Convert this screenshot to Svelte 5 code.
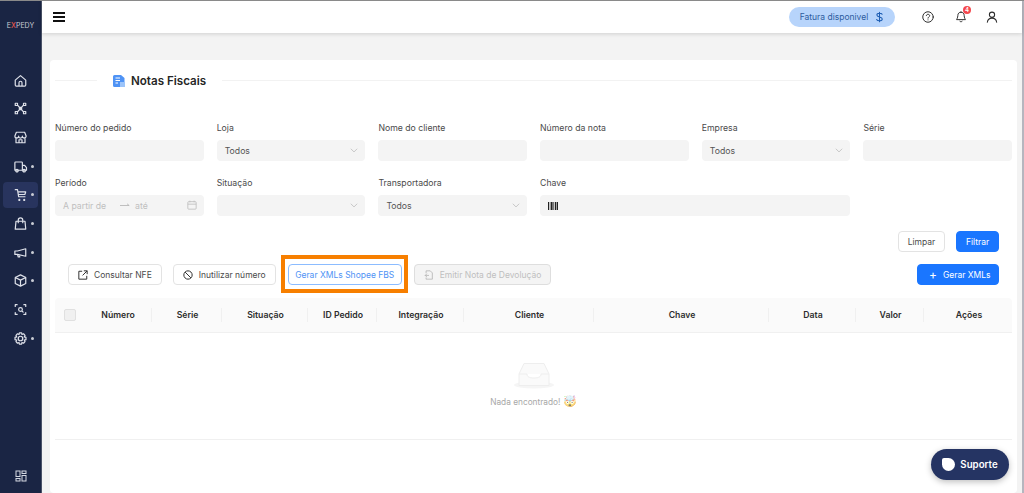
<script lang="ts">
  const navIcons = [
    { d: 'M3 9.500 10 3.500l7 6V16a1.500 1.500 0 0 1-1.500 1.500h-11A1.500 1.500 0 0 1 3 16ZM8 17.500V13a2 2 0 0 1 4 0v4.500', dot: false },
    { d: 'M10 10 6 5.500M10 10l4-4.500M10 10l-4 4.500M10 10l4 4.500M3 3h3v3H3ZM14 3h3v3h-3ZM3 14h3v3H3ZM14 14h3v3h-3ZM8.500 8.500h3v3h-3Z', dot: false },
    { d: 'M4.500 3h11L17.500 8a2.500 2.500 0 0 1-5 .2 2.500 2.500 0 0 1-5 0 2.500 2.500 0 0 1-5-.2ZM4 11v6h12v-6M8 17v-4h4v4', dot: false },
    { d: 'M2.500 5a1 1 0 0 1 1-1h8a1 1 0 0 1 1 1v10h-10ZM12.500 8.500h3l2.500 3V15h-5.500M7 15.500a1.700 1.700 0 1 1-3.400 0 1.700 1.700 0 0 1 3.400 0ZM16.500 15.500a1.700 1.700 0 1 1-3.400 0 1.700 1.700 0 0 1 3.400 0Z', dot: true },
    { d: 'M3 3.500h3l1.500 9.500h8.500M6.500 6.500h10.500l-1.200 3.500H7M8.500 16.500a.7.7 0 1 1-.1 0ZM15 16.500a.7.7 0 1 1-.1 0Z', dot: true, active: true },
    { d: 'M4 7h12l1 10.500H3ZM7 9V5.500a3 3 0 0 1 6 0V9', dot: true },
    { d: 'M2.500 8v4.500h3.500l11 2.500V5L6 8ZM6 12.500 7 16h2l-.8-3', dot: true },
    { d: 'M10 2.500 17 6v8l-7 3.500L3 14V6ZM3 6l7 3.500L17 6M10 9.500v8', dot: true },
    { d: 'M3 6V3.500h2.500M14.500 3.500H17V6M17 14v2.500h-2.500M5.500 16.500H3V14M10 7.500a2.500 2.500 0 1 0 0 5 2.500 2.500 0 0 0 0-5ZM12 12l1.500 1.500', dot: false },
    { d: 'M10 7a3 3 0 1 0 0 6 3 3 0 0 0 0-6ZM8.500 2.500h3l.5 2.200 2-1 2 2.200-1 2 2.300.6v3l-2.300.6 1 2-2 2.200-2-1-.5 2.200h-3l-.5-2.200-2 1-2-2.200 1-2-2.300-.6v-3l2.300-.6-1-2 2-2.200 2 1Z', dot: true },
  ];

  const row1 = [
    { label: 'Número do pedido' },
    { label: 'Loja', value: 'Todos', select: true },
    { label: 'Nome do cliente' },
    { label: 'Número da nota' },
    { label: 'Empresa', value: 'Todos', select: true },
    { label: 'Série' },
  ];

  const columns = [
    { label: 'Número', w: 67 },
    { label: 'Série', w: 70 },
    { label: 'Situação', w: 86 },
    { label: 'ID Pedido', w: 69 },
    { label: 'Integração', w: 87 },
    { label: 'Cliente', w: 130 },
    { label: 'Chave', w: 175 },
    { label: 'Data', w: 87 },
    { label: 'Valor', w: 68 },
    { label: 'Ações', w: 0 },
  ];
</script>

<div class="page">
  <aside class="sidebar">
    <div class="logo"><span>E</span><b>X</b><span>PEDY</span></div>
    <nav class="nav">
      {#each navIcons as item}
        <div class="nav-item" class:active={item.active}>
          <svg viewBox="0 0 20 20" width="15" height="15" fill="none" stroke="#dfe2ea" stroke-width="1.600" stroke-linejoin="round" stroke-linecap="round"><path d={item.d} /></svg>
          {#if item.dot}<span class="nav-dot"></span>{/if}
        </div>
      {/each}
    </nav>
    <svg class="apps" viewBox="0 0 12 12" width="12" height="12" fill="none" stroke="#d5d9e2" stroke-width="1"><rect x="1" y="1" width="4" height="5.500" /><rect x="7" y="1" width="4" height="2.500" /><rect x="1" y="8.500" width="4" height="2.500" /><rect x="7" y="5.500" width="4" height="5.500" /></svg>
  </aside>

  <div class="main">
    <header class="topbar">
      <div class="burger"><i></i><i></i><i></i></div>
      <div class="top-right">
        <div class="invoice">
          <span>Fatura disponivel</span>
          <svg viewBox="0 0 12 14" width="9" height="12" fill="none" stroke="#1f5fb4" stroke-width="1.400" stroke-linecap="round"><path d="M6 .8v12.400M9.500 3.300C9 2.300 7.800 2 6 2 4 2 2.500 2.800 2.500 4.400 2.500 7.800 9.700 6 9.700 9.600 9.700 11.200 8 12 6 12c-2 0-3.300-.5-3.800-1.700" /></svg>
        </div>
        <svg class="help" viewBox="0 0 16 16" width="12" height="12" fill="none" stroke="#2b2b2b" stroke-width="1.300" stroke-linecap="round"><circle cx="8" cy="8" r="7" /><path d="M5.800 6.200C6 4.900 7 4.400 8 4.400c1.300 0 2.200.8 2.200 1.900 0 1.600-2.200 1.600-2.200 3.200M8 11.800v.1" /></svg>
        <div class="bell">
          <svg viewBox="0 0 16 16" width="12" height="12" fill="none" stroke="#2b2b2b" stroke-width="1.300" stroke-linejoin="round" stroke-linecap="round"><path d="M8 1.500c-2.800 0-4.200 2-4.200 4.500 0 3-1.800 5.500-1.800 5.500h12S12.200 9 12.200 6c0-2.500-1.400-4.500-4.200-4.500ZM6.500 13.800c.8.800 2.200.8 3 0" /></svg>
          <span class="badge">4</span>
        </div>
        <svg class="user" viewBox="0 0 16 16" width="12" height="12" fill="none" stroke="#2b2b2b" stroke-width="1.400" stroke-linecap="round"><circle cx="8" cy="5" r="3.500" /><path d="M1.800 15c.5-3.500 3-5.500 6.200-5.500s5.700 2 6.200 5.500" /></svg>
      </div>
    </header>

    <div class="content">
      <section class="card">
        <div class="title-row">
          <span class="rule short"></span>
          <svg viewBox="0 0 12 12" width="12" height="12"><path d="M1.500 0h6.500L11.500 3v7.500A1.500 1.500 0 0 1 10 12H1.500A1.500 1.500 0 0 1 0 10.500V1.500A1.500 1.500 0 0 1 1.500 0Z" fill="#4f93f5" /><path d="M2.500 3h4.500M2.500 5.500h4.500M2.500 8h2.500" stroke="#fff" stroke-width="1.200" /><rect x="7" y="7" width="5" height="5" fill="#9cc4fa" /></svg>
          <h1>Notas Fiscais</h1>
          <span class="rule"></span>
        </div>

        <div class="filters">
          {#each row1 as f}
            <div class="field">
              <span class="label">{f.label}</span>
              <div class="input">
                {#if f.value}<span>{f.value}</span>{/if}
                {#if f.select}<svg class="chev" viewBox="0 0 10 6" width="8" height="5" fill="none" stroke="#bdbdbd"><path d="m1 .8 4 4 4-4" /></svg>{/if}
              </div>
            </div>
          {/each}

          <div class="field">
            <span class="label">Período</span>
            <div class="input range">
              <span class="ph from">A partir de</span>
              <svg viewBox="0 0 12 6" width="10" height="5" fill="none" stroke="#b5b5b5"><path d="M0 3h11M8.500 1 11 3" /></svg>
              <span class="ph">até</span>
              <svg class="cal" viewBox="0 0 12 12" width="10" height="10" fill="none" stroke="#bdbdbd"><rect x="1" y="2" width="10" height="9" rx="1" /><path d="M1 5h10M3.500 .8v2M8.500 .8v2" /></svg>
            </div>
          </div>
          <div class="field">
            <span class="label">Situação</span>
            <div class="input"><svg class="chev" viewBox="0 0 10 6" width="8" height="5" fill="none" stroke="#bdbdbd"><path d="m1 .8 4 4 4-4" /></svg></div>
          </div>
          <div class="field">
            <span class="label">Transportadora</span>
            <div class="input"><span>Todos</span><svg class="chev" viewBox="0 0 10 6" width="8" height="5" fill="none" stroke="#bdbdbd"><path d="m1 .8 4 4 4-4" /></svg></div>
          </div>
          <div class="field wide">
            <span class="label">Chave</span>
            <div class="input barcode">
              <svg viewBox="0 0 10 8" width="10" height="8" fill="#222"><rect width="1" height="8" /><rect x="1.800" width=".6" height="8" /><rect x="3" width="1.600" height="8" /><rect x="5.400" width=".6" height="8" /><rect x="6.800" width="1.600" height="8" /><rect x="9" width="1" height="8" /></svg>
            </div>
          </div>
        </div>

        <div class="filter-actions">
          <button class="btn limpar">Limpar</button>
          <button class="btn primary filtrar">Filtrar</button>
        </div>

        <div class="actions">
          <button class="btn">
            <svg viewBox="0 0 12 12" width="10" height="10" fill="none" stroke="#333" stroke-width="1.200"><path d="M5 1.500H1v9.500h9.500V7M7 1h4v4M11 1 5.500 6.500" /></svg>
            Consultar NFE
          </button>
          <button class="btn">
            <svg viewBox="0 0 12 12" width="10" height="10" fill="none" stroke="#333" stroke-width="1.200"><circle cx="6" cy="6" r="5" /><path d="m2.500 2.500 7 7" /></svg>
            Inutilizar número
          </button>
          <div class="highlight"><button class="btn outline">Gerar XMLs Shopee FBS</button></div>
          <button class="btn disabled">
            <svg viewBox="0 0 12 12" width="10" height="10" fill="none" stroke="#b5b5b5"><path d="M2.500 4V1h5l2.500 2.500V11H2.500V9M1 6.500h5M3.500 4.500l-2 2 2 2" /></svg>
            Emitir Nota de Devolução
          </button>
          <button class="btn primary gerar"><span class="plus">+</span>Gerar XMLs</button>
        </div>

        <div class="table-head">
          <span class="check-cell"><i></i></span>
          {#each columns as c}
            <span class="th" class:last={!c.w} style={c.w ? `width:${c.w}px` : ''}>{c.label}</span>
          {/each}
        </div>

        <div class="empty">
          <svg viewBox="0 0 44 28" width="44" height="28" fill="none"><ellipse cx="22" cy="23" rx="20" ry="3.500" fill="#f5f5f5" /><path d="M7 12 12 1.500h20L37 12v11.500H7Z" fill="#fafafa" stroke="#eeeeee" /><path d="M7 12h8c0 2.500 2 4 7 4s7-1.500 7-4h8" fill="#fff" stroke="#eeeeee" /></svg>
          <p>Nada encontrado! <span class="emoji">🤯</span></p>
        </div>
      </section>
    </div>

    <button class="support"><i></i>Suporte</button>
  </div>
  <div class="scrollbar"></div>
</div>

<style>
  :global(body) {
    margin: 0;
    font-family: Inter, "Noto Sans", sans-serif;
    overflow: hidden;
  }

  .page {
    display: flex;
    height: 493px;
    border-top: 1px solid #8a8a8a;
    box-sizing: border-box;
    overflow: hidden;
  }

  .scrollbar {
    width: 2px;
    flex-shrink: 0;
    background: #b6b6bf;
  }

  .sidebar {
    width: 41px;
    flex-shrink: 0;
    background: #1a2544;
    border-right: 1px solid #4a5268;
    display: flex;
    flex-direction: column;
    align-items: center;
    position: relative;
  }

  .logo {
    margin-top: 20px;
    font-size: 7px;
    color: #c9ccd4;
    line-height: 10px;
  }

  .logo b {
    color: #e4574c;
    font-weight: 500;
  }

  .nav {
    margin-top: 36px;
    display: flex;
    flex-direction: column;
    gap: 2.7px;
    width: 100%;
  }

  .nav-item {
    width: 35px;
    height: 26px;
    margin-left: 3px;
    border-radius: 4px;
    display: flex;
    align-items: center;
    padding-left: 10px;
    box-sizing: border-box;
    gap: 3px;
  }

  .nav-item.active {
    background: #28345e;
  }

  .nav-dot {
    width: 3px;
    height: 3px;
    border-radius: 50%;
    background: #c9ccd4;
  }

  .apps {
    position: absolute;
    bottom: 11px;
    left: 15px;
  }

  .main {
    flex: 1;
    min-width: 0;
    display: flex;
    flex-direction: column;
    background: #f3f3f3;
    position: relative;
  }

  .topbar {
    height: 32px;
    background: #fff;
    box-shadow: 0 1px 4px rgba(0, 0, 0, 0.15);
    display: flex;
    align-items: center;
    justify-content: space-between;
    padding: 0 24px 0 11px;
    position: relative;
    flex-shrink: 0;
  }

  .burger {
    display: flex;
    flex-direction: column;
    gap: 2.5px;
    width: 12px;
  }

  .burger i {
    display: block;
    height: 1.5px;
    background: #111;
  }

  .top-right {
    display: flex;
    align-items: center;
  }

  .invoice {
    width: 106px;
    height: 20px;
    border-radius: 10px;
    background: #b7d4fb;
    display: flex;
    align-items: center;
    justify-content: center;
    gap: 7px;
    font-size: 8.5px;
    color: #2d5c9e;
    margin-right: 27px;
  }

  .help {
    margin-right: 21px;
  }

  .bell {
    position: relative;
    display: flex;
    margin-right: 19px;
  }

  .badge {
    position: absolute;
    top: -5px;
    right: -4px;
    width: 8px;
    height: 8px;
    border-radius: 50%;
    background: #f4484d;
    color: #fff;
    font-size: 6px;
    line-height: 8px;
    text-align: center;
    font-weight: 600;
  }

  .content {
    padding: 27px 5px 0 8px;
    flex: 1;
    min-height: 0;
  }

  .card {
    background: #fff;
    border-radius: 4px;
    height: 100%;
    padding: 0 5px;
    box-sizing: border-box;
  }

  .title-row {
    height: 41px;
    display: flex;
    align-items: center;
    gap: 6px;
  }

  .rule {
    flex: 1;
    height: 1px;
    background: #f2f2f2;
    margin-left: 10px;
  }

  .rule.short {
    flex: 0 0 42px;
    margin: 0 10px 0 0;
  }

  h1 {
    margin: 0;
    font-size: 11.6px;
    font-weight: 600;
    color: #262626;
  }

  .filters {
    margin-top: 21px;
    display: grid;
    grid-template-columns: repeat(6, 148.6px);
    column-gap: 13.1px;
    row-gap: 16px;
  }

  .field {
    display: flex;
    flex-direction: column;
    gap: 6px;
  }

  .field.wide {
    grid-column: span 2;
  }

  .label {
    font-size: 8.7px;
    line-height: 12px;
    color: #4a4a4a;
  }

  .input {
    height: 21px;
    border-radius: 4px;
    background: #f4f4f4;
    display: flex;
    align-items: center;
    padding: 0 8px;
    font-size: 8.7px;
    color: #555;
    position: relative;
  }

  .chev {
    position: absolute;
    right: 7px;
    top: 8px;
  }

  .range {
    gap: 5px;
  }

  .ph {
    color: #bfbfbf;
  }

  .ph.from {
    width: 52px;
  }

  .cal {
    position: absolute;
    right: 7px;
    top: 5px;
  }

  .filter-actions {
    margin-top: 15px;
    padding-right: 13px;
    display: flex;
    justify-content: flex-end;
    gap: 11px;
  }

  .btn {
    height: 21px;
    box-sizing: border-box;
    padding: 0 9px;
    border: 1px solid #e3e3e3;
    border-radius: 4px;
    background: #fff;
    color: #4a4a4a;
    font: inherit;
    font-size: 8.5px;
    display: inline-flex;
    align-items: center;
    gap: 6px;
    white-space: nowrap;
  }

  .btn.limpar {
    width: 47px;
    padding: 0;
    justify-content: center;
  }

  .btn.filtrar {
    width: 43px;
    padding: 0;
    justify-content: center;
  }

  .btn.primary {
    background: #1a76ff;
    border-color: #1a76ff;
    color: #fff;
  }

  .actions {
    margin-top: 12px;
    padding: 0 13px;
    display: flex;
    align-items: center;
    gap: 11px;
  }

  .highlight {
    position: relative;
    display: flex;
    margin: 0 1px;
  }

  .highlight::after {
    content: '';
    position: absolute;
    inset: -9px -6px -8px -7px;
    border: 4.5px solid #f77f00;
    pointer-events: none;
  }

  .btn.outline {
    width: 114px;
    justify-content: center;
    padding: 0;
    border-color: #8cbcff;
    color: #4f93f5;
  }

  .btn.disabled {
    background: #f4f4f4;
    border-color: #dedede;
    color: #bfbfbf;
  }

  .btn.gerar {
    margin-left: auto;
    width: 82px;
    padding: 0 0 0 11px;
  }

  .plus {
    font-size: 12px;
    line-height: 1;
  }

  .table-head {
    margin-top: 13px;
    height: 35px;
    background: #fafafa;
    border-bottom: 1px solid #f0f0f0;
    box-sizing: border-box;
    display: flex;
    align-items: center;
    border-radius: 4px 4px 0 0;
  }

  .check-cell {
    width: 30px;
    padding-left: 9px;
    box-sizing: border-box;
    flex-shrink: 0;
  }

  .check-cell i {
    display: block;
    width: 10px;
    height: 10px;
    border-radius: 2px;
    background: #f0f0f0;
    border: 1px solid #e0e0e0;
  }

  .th {
    flex-shrink: 0;
    box-sizing: border-box;
    font-size: 8.7px;
    font-weight: 600;
    color: #2e2e2e;
    text-align: center;
    border-right: 1px solid #f0f0f0;
    line-height: 14px;
  }

  .th + .th {
    padding-left: 2px;
  }

  .th.last {
    flex: 1;
    border: 0;
  }

  .empty {
    height: 107px;
    border-bottom: 1px solid #f0f0f0;
    display: flex;
    flex-direction: column;
    align-items: center;
    padding-top: 29px;
    box-sizing: border-box;
  }

  .empty p {
    margin: 4px 0 0;
    font-size: 8.3px;
    color: #a8a8a8;
  }

  .emoji {
    font-size: 11px;
    opacity: 0.6;
  }

  .support {
    position: absolute;
    right: 13px;
    bottom: 13px;
    width: 78px;
    height: 31px;
    border-radius: 16px;
    border: 0;
    background: #253463;
    color: #fff;
    font: inherit;
    font-size: 9.7px;
    font-weight: 600;
    display: flex;
    align-items: center;
    justify-content: center;
    gap: 5px;
    box-shadow: 0 2px 6px rgba(0, 0, 0, 0.25);
  }

  .support i {
    width: 13px;
    height: 13px;
    background: #fff;
    border-radius: 2px 50% 50% 50%;
  }
</style>
